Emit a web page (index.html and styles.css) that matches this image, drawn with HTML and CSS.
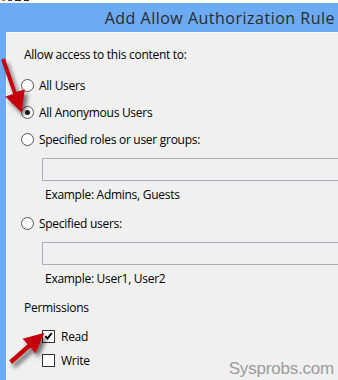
FILE: index.html
```html
<!DOCTYPE html>
<html>
<head>
<meta charset="utf-8">
<link rel="stylesheet" href="styles.css">
</head>
<body>
<div class="topstrip"><span class="frag f1"></span><span class="frag f2"></span><span class="frag f3"></span><span class="frag f4"></span></div>
<div class="titlebar">Add Allow Authorization Rule</div>
<div class="panel">
  <div class="label first">Allow access to this content to:</div>
  <div class="option opt1"><span class="radio"></span><span>All Users</span></div>
  <div class="option"><span class="radio checked"></span><span>All Anonymous Users</span></div>
  <div class="option"><span class="radio"></span><span>Specified roles or user groups:</span></div>
  <div class="textbox"></div>
  <div class="example">Example: Admins, Guests</div>
  <div class="option opt-users"><span class="radio"></span><span>Specified users:</span></div>
  <div class="textbox"></div>
  <div class="example">Example: User1, User2</div>
  <div class="label perms">Permissions</div>
  <div class="check first-check"><span class="box"><svg width="12" height="12" viewBox="0 0 12 12"><path d="M2.5 6.2 L4.8 8.8 L9.6 2.8" fill="none" stroke="#000" stroke-width="2"/></svg></span><span>Read</span></div>
  <div class="check"><span class="box"></span><span>Write</span></div>
  <div class="watermark">Sysprobs.com</div>
</div>
<svg class="arrows" width="338" height="380" viewBox="0 0 338 380">
  <defs>
    <filter id="sh" x="-50%" y="-50%" width="200%" height="200%">
      <feDropShadow dx="3" dy="4" stdDeviation="2.2" flood-color="#000" flood-opacity="0.55"/>
    </filter>
  </defs>
  <g filter="url(#sh)" fill="#c4050a">
    <path d="M1.2 59.8 L4.9 58.3 L16.4 91.8 L24.8 89.4 L21.6 112.5 L5.2 96.6 L13.2 94 Z"/>
    <path d="M9.3 360.2 L11.9 364 L30.8 347.6 L35.4 353.4 L44.5 332.8 L22.6 338.8 L27.6 344.3 Z"/>
  </g>
</svg>
</body>
</html>
```
FILE: styles.css
```css
html, body {
  margin: 0;
  padding: 0;
}
body {
  width: 338px;
  height: 380px;
  overflow: hidden;
  background: #6caaf4;
  font-family: "Open Sans", "Noto Sans", sans-serif;
  font-size: 12px;
  letter-spacing: -0.28px;
  color: #000;
  position: relative;
}
.topstrip {
  height: 3px;
  background: #ffffff;
  display: flex;
  align-items: flex-start;
  gap: 3px;
  padding-left: 2px;
}
.frag {
  height: 1px;
  background: #222;
}
.f1 { width: 3px; background: #c96a2a; }
.f2 { width: 4px; background: #2a4a8a; }
.f3 { width: 6px; }
.f4 { width: 5px; }
.titlebar {
  height: 29px;
  box-sizing: border-box;
  padding: 4px 3px 0 0;
  text-align: right;
  font-family: "Open Sans", sans-serif;
  font-size: 16px;
  color: #2b2b2b;
  letter-spacing: 0.5px;
}
.panel {
  margin-left: 6px;
  height: 348px;
  box-sizing: border-box;
  background: #f0f0f0;
  border-top: 1px solid #fbfbfb;
  border-left: 1px solid #fbfbfb;
  padding-left: 17px;
  position: relative;
}
.label {
  line-height: 16px;
}
.label.first {
  padding-top: 14px;
}
.option {
  display: flex;
  align-items: center;
  height: 16px;
  gap: 5px;
  margin-left: -3px;
  margin-top: 11px;
}
.option.opt1 { margin-top: 14px; }
.radio {
  width: 11px;
  height: 11px;
  border: 1px solid #555;
  border-radius: 50%;
  background: #fff;
  box-sizing: content-box;
  position: relative;
  flex: none;
}
.radio.checked::after {
  content: "";
  position: absolute;
  left: 3px;
  top: 3px;
  width: 5px;
  height: 5px;
  border-radius: 50%;
  background: #1a1a1a;
}
.textbox {
  margin-left: 18px;
  margin-top: 11px;
  height: 21px;
  border: 1px solid #abadb3;
  border-right: none;
  background: #f0f0f0;
}
.example {
  margin-left: 21px;
  margin-top: 6px;
  line-height: 16px;
}
.opt-users { margin-top: 12px; }
.label.perms {
  margin-top: 13px;
}
.check {
  display: flex;
  align-items: center;
  gap: 6px;
  margin-left: 18px;
  height: 16px;
  margin-top: 12px;
}
.check + .check { margin-top: 8px; }
.box {
  width: 11px;
  height: 11px;
  border: 1px solid #333;
  background: #fff;
  flex: none;
  display: flex;
}
.box svg { display: block; margin: -1px 0 0 0; }
.watermark {
  position: absolute;
  right: 4px;
  bottom: 1px;
  font-family: "Liberation Sans", sans-serif;
  font-size: 17px;
  color: #9c9c9c;
  letter-spacing: -0.2px;
}
.arrows {
  position: absolute;
  left: 0;
  top: 0;
  pointer-events: none;
}
```
